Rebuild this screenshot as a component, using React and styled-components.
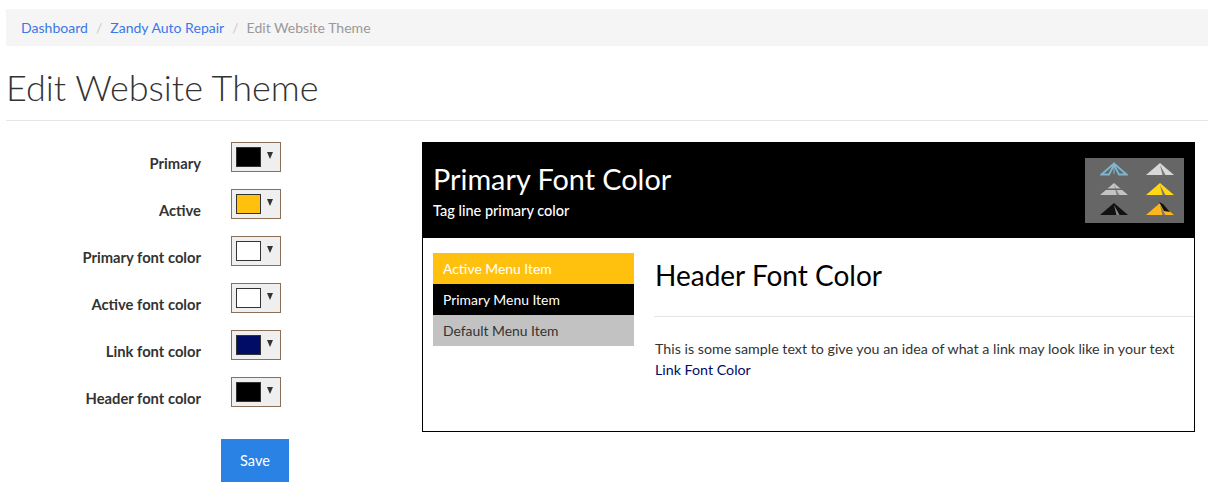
import React from 'react';
import styled, { createGlobalStyle } from 'styled-components';

const Global = createGlobalStyle`
    body {
        margin: 0;
        background: #fff;
        font-family: "Lato", "Noto Sans", sans-serif;
        color: #333;
    }
`;

const Page = styled.div`
    padding: 9px 0 0 6px;
    width: 1202px;
`;

const Breadcrumb = styled.div`
    display: flex;
    align-items: center;
    height: 37px;
    padding-left: 15px;
    background: #f5f5f5;
    font-size: 14.05px;
`;

const Crumb = styled.a`
    color: ${({ $current }) => ($current ? '#999' : '#3b78e7')};
`;

const Slash = styled.span`
    color: #ccc;
    padding: 0 8px;
`;

const Title = styled.h1`
    margin: 20px 0 0;
    height: 54px;
    line-height: 42px;
    font-size: 36px;
    font-weight: 300;
    color: #333;
    border-bottom: 1px solid #e5e5e5;
`;

const Content = styled.div`
    display: flex;
    margin-top: 21px;
`;

const Form = styled.form`
    width: 416px;
    flex: none;
`;

const Row = styled.div`
    display: flex;
    height: 30px;
    margin-bottom: 17px;
`;

const Label = styled.label`
    width: 195px;
    margin-top: 11px;
    text-align: right;
    font-size: 14.75px;
    font-weight: 700;
    line-height: 20px;
`;

const Swatch = styled.div`
    display: flex;
    box-sizing: border-box;
    width: 50px;
    height: 30px;
    margin-left: 30px;
    padding: 4px 0 0 4px;
    background: #efefef;
    border: 1px solid #8a7058;
`;

const Chip = styled.div`
    box-sizing: border-box;
    width: 25px;
    height: 20px;
    background: ${({ $color }) => $color};
    border: 1px solid #333;
`;

const Arrow = styled.span`
    width: 0;
    height: 0;
    margin: 5px 0 0 6px;
    border-left: 3.5px solid transparent;
    border-right: 3.5px solid transparent;
    border-top: 7px solid #333;
`;

const Save = styled.button`
    display: block;
    width: 68px;
    height: 43px;
    margin: 32px 0 0 215px;
    border: 0;
    background: #2a82e4;
    color: #fff;
    font-family: inherit;
    font-size: 14.5px;
`;

const Preview = styled.div`
    box-sizing: border-box;
    width: 773px;
    height: 290px;
    border: 1px solid #000;
`;

const PreviewHead = styled.div`
    display: flex;
    justify-content: space-between;
    height: 95px;
    padding: 15px 10px 0;
    box-sizing: border-box;
    background: #000;
    color: #fff;
`;

const SiteName = styled.div`
    margin-top: 4px;
    font-size: 28.8px;
    line-height: 34px;
`;

const Tagline = styled.div`
    margin-top: 6px;
    font-size: 14.5px;
    font-weight: 500;
    line-height: 18px;
`;

const Logos = styled.div`
    display: grid;
    grid-template-columns: 46px 46px;
    grid-auto-rows: 20px;
    align-items: center;
    justify-items: center;
    box-sizing: border-box;
    width: 99px;
    height: 65px;
    padding: 1px 0 0 6px;
    background: #666;
`;

const PreviewBody = styled.div`
    display: flex;
    padding: 15px 0 0 10px;
`;

const Menu = styled.div`
    width: 201px;
    flex: none;
`;

const MenuItem = styled.div`
    height: 31px;
    padding-left: 10px;
    line-height: 31px;
    font-size: 13.9px;
    background: ${({ $bg }) => $bg};
    color: ${({ $fg }) => $fg};
`;

const Main = styled.div`
    flex: 1;
    margin-left: 20px;
`;

const Heading = styled.h2`
    margin: 0;
    height: 63px;
    padding-left: 1px;
    font-size: 28px;
    font-weight: 400;
    line-height: 44px;
    color: #000;
    border-bottom: 1px solid #e5e5e5;
`;

const Sample = styled.p`
    margin: 21px 0 0 1px;
    font-size: 14.25px;
    line-height: 21px;
`;

const SampleLink = styled.a`
    display: block;
    color: #000c66;
`;

const rows = [
    ['Primary', '#000'],
    ['Active', '#ffc10e'],
    ['Primary font color', '#fff'],
    ['Active font color', '#fff'],
    ['Link font color', '#000c66'],
    ['Header font color', '#000'],
];

// the little tent logo: a filled body with a slit running down from the top
const BODY = '0,13 14,1 28,13';
const SLIT = '14,3 16.5,13 19.5,13';

function Logo({ fill, slit, band, outline, cut }) {
    if (outline) {
        return (
            <svg width="28" height="14" viewBox="0 0 28 14">
                <polygon points="1.5,12.5 14,1.5 26.5,12.5 19,12.5 14,3 9,12.5" fill="none" stroke={outline} strokeWidth="1.8" />
                <line x1="14" y1="3" x2="14" y2="12" stroke={outline} strokeWidth="1" />
            </svg>
        );
    }
    return (
        <svg width="28" height="14" viewBox="0 0 28 14">
            <polygon points={BODY} fill={fill} />
            <polygon points={SLIT} fill={slit} />
            {band && <polygon points="13,0 17,2 24,10 18,9" fill={band} />}
            {cut && <rect x="0" y="6.5" width="28" height="1.5" fill={cut} />}
        </svg>
    );
}

export default function App() {
    return (
        <Page>
            <Global />
            <Breadcrumb>
                <Crumb>Dashboard</Crumb>
                <Slash>/</Slash>
                <Crumb>Zandy Auto Repair</Crumb>
                <Slash>/</Slash>
                <Crumb $current>Edit Website Theme</Crumb>
            </Breadcrumb>
            <Title>Edit Website Theme</Title>
            <Content>
                <Form>
                    {rows.map(([label, color]) => (
                        <Row key={label}>
                            <Label>{label}</Label>
                            <Swatch>
                                <Chip $color={color} />
                                <Arrow />
                            </Swatch>
                        </Row>
                    ))}
                    <Save type="button">Save</Save>
                </Form>
                <Preview>
                    <PreviewHead>
                        <div>
                            <SiteName>Primary Font Color</SiteName>
                            <Tagline>Tag line primary color</Tagline>
                        </div>
                        <Logos>
                            <Logo outline="#7fb6cf" />
                            <Logo fill="#d8d8d8" slit="#777" />
                            <Logo fill="#c4c4c4" slit="#888" cut="#666" />
                            <Logo fill="#ffd814" slit="#777" />
                            <Logo fill="#111" slit="#888" />
                            <Logo fill="#fdb71a" slit="#777" band="#111" />
                        </Logos>
                    </PreviewHead>
                    <PreviewBody>
                        <Menu>
                            <MenuItem $bg="#ffc10e" $fg="#fff">Active Menu Item</MenuItem>
                            <MenuItem $bg="#000" $fg="#fff">Primary Menu Item</MenuItem>
                            <MenuItem $bg="#c2c2c2" $fg="#333">Default Menu Item</MenuItem>
                        </Menu>
                        <Main>
                            <Heading>Header Font Color</Heading>
                            <Sample>
                                This is some sample text to give you an idea of what a link may look like in your text
                                <SampleLink>Link Font Color</SampleLink>
                            </Sample>
                        </Main>
                    </PreviewBody>
                </Preview>
            </Content>
        </Page>
    );
}
